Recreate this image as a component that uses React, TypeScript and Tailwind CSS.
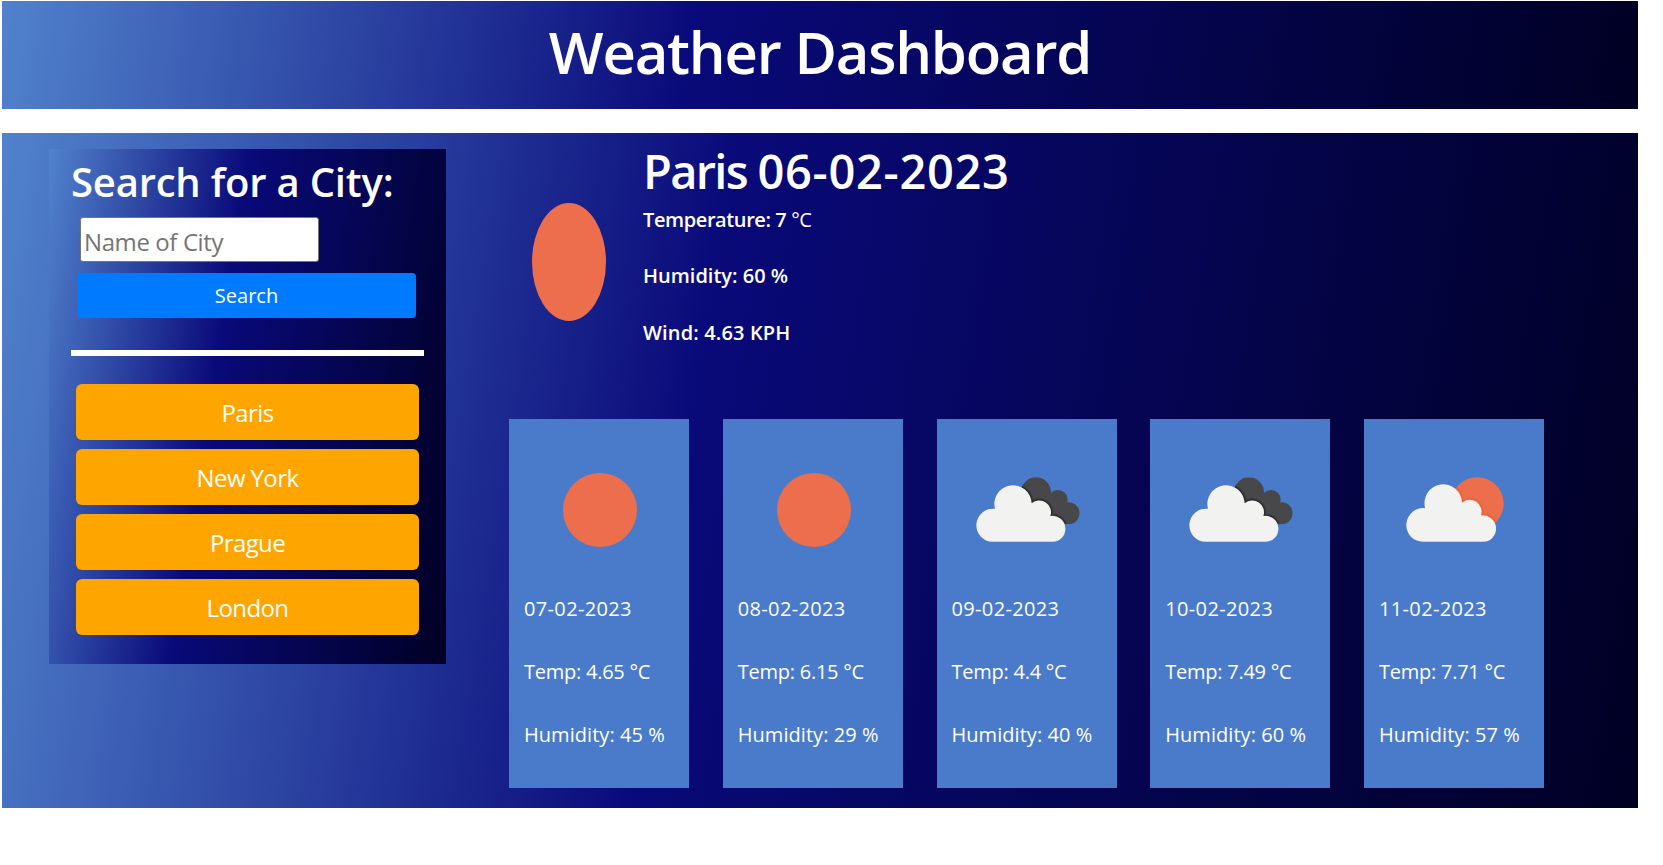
const CLOUD =
  "M98 245.5 A49.7 49.7 0 1 1 105 146.5 A56 56 0 1 1 215 130 A35 35 0 0 1 271 168 A39 39 0 1 1 278 245.5 Z";

type Sky = "sun" | "clouds" | "partly";

function SkyIcon({ sky, id }: { sky: Sky; id: string }) {
  return (
    <svg viewBox="0 0 180 157" className="block h-[157px] w-[180px]" aria-hidden="true">
      {sky === "sun" && <circle cx="91" cy="91" r="37" fill="#ec6e4c" />}
      {sky === "clouds" && (
        <g transform="translate(23 41) scale(.33333)">
          <defs>
            <clipPath id={id}>
              <circle cx="228" cy="97" r="45" />
              <circle cx="294" cy="119" r="29" />
              <circle cx="326" cy="160" r="33" />
              <path d="M228 97 L294 110 L326 145 L326 193 L240 193 Z" />
            </clipPath>
          </defs>
          <g clipPath={`url(#${id})`}>
            <rect x="180" y="45" width="190" height="155" fill="#48484a" />
            <path d={CLOUD} fill="none" stroke="#3a3a3c" strokeWidth="14" />
            <path d={CLOUD} fill="none" stroke="#2b2b2d" strokeWidth="7" />
          </g>
          <path d={CLOUD} fill="#f2f2f0" />
        </g>
      )}
      {sky === "partly" && (
        <g transform="translate(26 41) scale(.33333)">
          <defs>
            <clipPath id={id}>
              <circle cx="262" cy="130.500" r="79" />
            </clipPath>
          </defs>
          <g clipPath={`url(#${id})`}>
            <rect x="180" y="45" width="170" height="170" fill="#ec6e4c" />
            <g transform="translate(-.5 -4.4) scale(1.008 1.018)">
              <path d={CLOUD} fill="none" stroke="#ee6237" strokeWidth="12" />
            </g>
          </g>
          <path d={CLOUD} transform="translate(-.5 -4.4) scale(1.008 1.018)" fill="#f2f2f0" />
        </g>
      )}
    </svg>
  );
}

const cities = ["Paris", "New York", "Prague", "London"];

const forecast: { date: string; temp: string; humidity: string; sky: Sky }[] = [
  { date: "07-02-2023", temp: "4.65", humidity: "45", sky: "sun" },
  { date: "08-02-2023", temp: "6.15", humidity: "29", sky: "sun" },
  { date: "09-02-2023", temp: "4.4", humidity: "40", sky: "clouds" },
  { date: "10-02-2023", temp: "7.49", humidity: "60", sky: "clouds" },
  { date: "11-02-2023", temp: "7.71", humidity: "57", sky: "partly" },
];

export default function App() {
  return (
    <div className="h-[865px] overflow-hidden bg-white pt-px pl-0.5 font-['Open_Sans','Noto_Sans',sans-serif] text-white">
      <header className="h-[108px] w-[1636px] bg-[linear-gradient(99deg,#5182cd_0%,#090979_42.500%,#000024_100%)]">
        <h1 className="text-center text-[58px] leading-[102px] font-semibold tracking-[-1.2px]">Weather Dashboard</h1>
      </header>

      <main className="mt-6 flex h-[675px] w-[1636px] bg-[linear-gradient(99deg,#5182cd_0%,#090979_42.500%,#000024_100%)]">
        <aside className="mt-4 ml-[47px] h-[515px] w-[397px] shrink-0 bg-[linear-gradient(99deg,#5182cd_0%,#090979_42.500%,#000024_100%)] pr-[22px] pl-[22px]">
          <h2 className="h-16 text-[40px] leading-[66px] font-semibold tracking-[-0.2px] whitespace-nowrap">Search for a City:</h2>
          <input
            type="text"
            placeholder="Name of City"
            className="mt-1 ml-[9px] block h-[45px] w-[239px] rounded-[3px] border border-[#767676] bg-white px-[3px] pt-[3px] text-2xl tracking-[-0.4px] text-black placeholder:text-[#757575]"
          />
          <button className="mt-[11px] ml-1.5 block h-[45px] w-[339px] rounded bg-[#007bff] pt-px text-xl">Search</button>
          <div className="mt-8 h-1.5 w-[353px] bg-white" />
          <div className="mt-7 ml-[5px] flex w-[343px] flex-col gap-[9px]">
            {cities.map((city) => (
              <button key={city} className="h-14 rounded-[6px] bg-[#ffa500] pt-0.5 text-2xl tracking-[-0.6px]">
                {city}
              </button>
            ))}
          </div>
        </aside>

        <div className="ml-[63px] flex flex-col">
          <section className="flex h-[286px]">
            <svg viewBox="0 0 74 118" className="mt-[70px] ml-[23px] h-[118px] w-[74px]" aria-hidden="true">
              <ellipse cx="37" cy="59" rx="37" ry="59" fill="#ec6e4c" />
            </svg>
            <div className="mt-[18px] ml-[37px] text-xl leading-[56.400px] font-semibold whitespace-nowrap">
              <h2 className="text-[47px] leading-[41px] tracking-[0.7px]">
                <span className="tracking-[-1.7px]">Paris </span>06-02-2023
              </h2>
              <p className="tracking-[-0.4px]">
                Temperature: 7 <span className="font-normal">°C</span>
              </p>
              <p>Humidity: 60 %</p>
              <p className="tracking-[0.15px]">Wind: 4.63 KPH</p>
            </div>
          </section>

          <section className="flex gap-[33.750px]">
            {forecast.map((day) => (
              <article key={day.date} className="h-[369px] w-[180px] bg-[#4a7bca] text-xl leading-[63px] whitespace-nowrap">
                <SkyIcon sky={day.sky} id={`back-${day.date}`} />
                <div className="pt-px pl-[15px]">
                  <p className="tracking-[0.35px]">{day.date}</p>
                  <p className="tracking-[-0.25px]">Temp: {day.temp} °C</p>
                  <p className="tracking-[0.05px]">Humidity: {day.humidity} %</p>
                </div>
              </article>
            ))}
          </section>
        </div>
      </main>
    </div>
  );
}
